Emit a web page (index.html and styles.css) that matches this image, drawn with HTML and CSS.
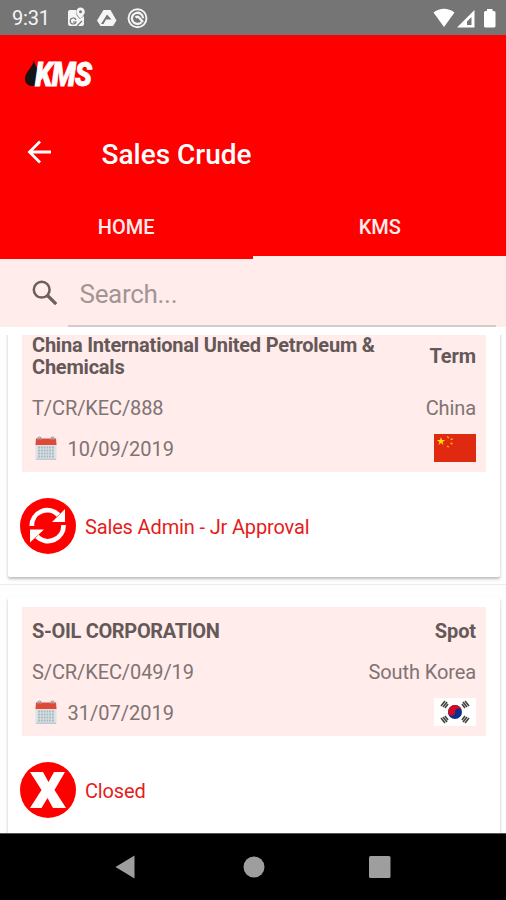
FILE: index.html
```html
<!DOCTYPE html>
<html lang="en">
<head>
<meta charset="utf-8">
<title>Sales Crude</title>
<link rel="stylesheet" href="styles.css">
</head>
<body>
<svg width="0" height="0" class="defs">
  <symbol id="calendar" viewBox="0 0 22 25">
    <path d="M.5 8h21v14.5q0 1.500-1.500 1.500H2Q.5 24 .5 22.500z" fill="#dce3e6"/>
    <path d="M1 22.500h20V24H1z" fill="#bccbd2"/>
    <path d="M1 2.500h20l.5 6.500H.5z" fill="#df4937"/>
    <path d="M3 11.500h16M3 14.500h16M3 17.500h16M3 20.500h16" stroke="#a9bac2" stroke-width="1.800" stroke-dasharray="2 .8"/>
    <path d="M3 4V2.500a1.500 1.500 0 0 1 3 0V4M16 4V2.500a1.500 1.500 0 0 1 3 0V4" fill="none" stroke="#929da4" stroke-width="1.200"/>
  </symbol>
</svg>
<div class="screen">
  <div class="statusbar">
    <span class="time">9:31</span>
    <svg class="left-icons" width="86" height="24" viewBox="64 5 86 24">
      <path fill="#f5f5f5" d="M69 9h7q-1 5 4 9l4-3v8q0 2-2 2H70q-2 0-2-2V11q0-2 2-2z"/>
      <path d="M76 19a3 3 0 1 0 0 2h-3M77 25l5-5" fill="none" stroke="#777" stroke-width="1.200"/>
      <path fill="#f5f5f5" d="M80.500 6.500a4.300 4.300 0 0 1 4.300 4.300c0 3-4.300 7-4.300 7s-4.300-4-4.300-7a4.300 4.300 0 0 1 4.300-4.300z"/>
      <circle cx="80.500" cy="10.800" r="1.500" fill="#777"/>
      <path fill="#f5f5f5" d="M103.500 9h7l6 10.500-3.500 5.500h-12.500L97 19.500zM107 13.500L101 23h2.500l2.500-4.500h5.500z" fill-rule="evenodd"/>
      <circle cx="137.500" cy="17.300" r="9" fill="none" stroke="#f5f5f5" stroke-width="1.900"/>
      <path d="M141.500 21.300a5.600 5.600 0 1 1 1.600-4M134.500 22a5.600 5.600 0 0 0 4 .8" fill="none" stroke="#f5f5f5" stroke-width="2.300"/>
      <path d="M135.500 16.500q2-1.500 3.500 0l4 4.500" fill="none" stroke="#f5f5f5" stroke-width="2.400"/>
    </svg>
    <svg class="right-icons" width="66" height="24" viewBox="432 5 66 24">
      <path fill="#fff" d="M433.500 11.500q10.500-7.500 21 0L444 26z"/>
      <path fill="#fff" fill-rule="evenodd" d="M474.500 9v17.500H457zM471.500 16v8h-4.500v-3.500z"/>
      <path fill="#fff" d="M487 8h5.500v2h1.500q1.500 0 1.500 1.500v13.500q0 1.500-1.500 1.500h-8.500q-1.500 0-1.500-1.500V11.500q0-1.500 1.500-1.500H487z"/>
    </svg>
  </div>
  <header class="header">
    <div class="brand">
      <svg width="13" height="27" viewBox="0 0 13 27"><path fill="#171313" d="M9 0C8 7 0 12 0 19c0 4 3 7 7 7h3l3-17q-3-3-4-9z"/></svg>
      <span class="brand-name">KMS</span>
    </div>
    <div class="titlebar">
      <svg width="25" height="24" viewBox="0 0 25 24"><path d="M13 1.500L2.500 12 13 22.500M2.500 12H24" fill="none" stroke="#fff" stroke-width="2.800"/></svg>
      <h1 class="title">Sales Crude</h1>
    </div>
    <nav class="tabs">
      <div class="tab"><span>HOME</span></div>
      <div class="tab active"><span>KMS</span></div>
    </nav>
  </header>
  <div class="search">
    <svg width="26" height="26" viewBox="0 0 26 26"><circle cx="9.700" cy="9.700" r="7.900" fill="none" stroke="#6b5f5f" stroke-width="2.500"/><path d="M15.500 15.500l8.700 8.700" stroke="#6b5f5f" stroke-width="3.200"/></svg>
    <div class="field">Search...</div>
  </div>
  <main class="list">
    <article class="card first">
      <section class="panel">
        <div class="row head"><span class="china-name">China International United Petroleum &amp;<br>Chemicals</span><span class="kind">Term</span></div>
        <div class="row line"><span>T/CR/KEC/888</span><span>China</span></div>
        <div class="row line">
          <span class="date"><svg width="22" height="25"><use href="#calendar"/></svg>10/09/2019</span>
          <svg class="flag" width="42" height="28" viewBox="0 0 42 28">
            <path fill="#df2910" d="M0 0h42v28H0z"/>
            <path fill="#ffdb00" d="M7 3l1 3h3.200l-2.600 1.900 1 3.100L7 9.100 4.400 11l1-3.100L2.800 6H6z"/>
            <path d="M13 2.500l2 1.500M16.500 5.500l2.200-.5M16.500 9l2 1M13 12l1.800 1.200" stroke="#f4ad08" stroke-width="1.500"/>
          </svg>
        </div>
      </section>
      <div class="status">
        <svg width="56" height="56" viewBox="0 0 56 56">
          <circle cx="28" cy="28" r="28" fill="#f00"/>
          <path d="M11.800 28A15.500 15.500 0 0 1 38.500 17M43.500 27A15.500 15.500 0 0 1 17 38.500" fill="none" stroke="#fff" stroke-width="4.800"/>
          <path d="M45 11V24H32zM10 44.500V31.500H24z" fill="#fff"/>
        </svg>
        <span>Sales Admin - Jr Approval</span>
      </div>
    </article>
    <div class="divider"></div>
    <article class="card">
      <section class="panel">
        <div class="row head"><span class="oil-name">S-OIL CORPORATION</span><span class="kind">Spot</span></div>
        <div class="row line"><span>S/CR/KEC/049/19</span><span>South Korea</span></div>
        <div class="row line">
          <span class="date"><svg width="22" height="25"><use href="#calendar"/></svg>31/07/2019</span>
          <svg class="flag" width="42" height="28" viewBox="0 0 42 28">
            <path fill="#fff" d="M0 0h42v28H0z"/>
            <circle cx="21" cy="14" r="7" fill="#08318f"/>
            <path fill="#d50b24" d="M14 14a7 7 0 0 1 14 0a3.500 3.500 0 0 0-7 0a3.500 3.500 0 0 1-7 0z"/>
            <g stroke="#444" stroke-width="1.600">
              <path d="M7 8l4-5M9 9l4-5M11 10l3-4M28 22l3-4M29 24l4-5M31 25l4-5M31 3l4 5M29 4l4 5M28 6l3 4M11 18l3 4M9 19l4 5M7 20l4 5"/>
            </g>
          </svg>
        </div>
      </section>
      <div class="status">
        <svg width="56" height="56" viewBox="0 0 56 56">
          <circle cx="28" cy="28" r="28" fill="#f00"/>
          <path d="M10 10h13l5.500 10L34 10h11L34.500 28 46 46H33l-5.500-10-6 10H10l11.500-18z" fill="#fff"/>
        </svg>
        <span>Closed</span>
      </div>
    </article>
  </main>
  <footer class="navbar">
    <svg width="20" height="24" viewBox="0 0 20 24"><path d="M19.500.5v23L.5 12z" fill="#9e9e9e"/></svg>
    <svg class="home" width="22" height="22" viewBox="0 0 22 22"><circle cx="11" cy="11" r="10.500" fill="#9e9e9e"/></svg>
    <svg width="22" height="22" viewBox="0 0 22 22"><rect width="21.500" height="22" rx="1.500" fill="#9e9e9e"/></svg>
  </footer>
</div>
</body>
</html>
```

FILE: styles.css
```css
* { box-sizing: border-box; }
body { margin: 0; font-family: Roboto, "Liberation Sans", sans-serif; }
svg { display: block; flex: none; }
.defs { height: 0; }
.screen { width: 506px; height: 900px; display: flex; flex-direction: column; overflow: hidden; background: #fff; }
.statusbar { height: 35px; flex: none; background: #757575; display: flex; align-items: center; padding: 0 8px 0 12px; }
.time { width: 52px; color: #f5f5f5; font-size: 20px; line-height: 36px; letter-spacing: -.2px; }
.right-icons { margin-left: auto; }
.header { height: 224px; flex: none; background: #f00; color: #fff; display: flex; flex-direction: column; }
.brand { display: flex; height: 79px; padding: 25px 0 0 25px; }
.brand-name { margin-left: -3px; font: italic 900 34px/29px Roboto, sans-serif; letter-spacing: -1px; transform: scaleX(.83); transform-origin: left; -webkit-text-stroke: .8px #fff; }
.titlebar { height: 80px; display: flex; align-items: center; padding: 0 0 4px 27px; }
.title { margin: 5px 0 0 49.5px; font-size: 28px; font-weight: 500; line-height: 34px; white-space: nowrap; }
.tabs { display: flex; flex: 1; }
.tab { flex: 1; text-align: center; padding-top: 21px; font-size: 20px; line-height: 25px; font-weight: 500; color: #ffeceb; border-bottom: 3px solid #f00; }
.tab.active { border-bottom-color: #ffeceb; padding-left: 1px; }
.search { height: 68px; flex: none; background: #ffeceb; display: flex; align-items: center; padding: 0 10px 0 32px; }
.field { flex: 1; height: 68px; margin-left: 10px; padding-left: 11.5px; color: #a29595; font-size: 26px; line-height: 71px; letter-spacing: -.3px; border-bottom: 2px solid #d6cbc8; }
.list { height: 498px; margin-top: 8px; overflow: hidden; flex: none; background: #fefefe; }
.card { margin: 12px 6px 0 8px; padding: 10px 14px 23px; background: #fff; border-radius: 2px; box-shadow: 0 2px 3px rgba(0,0,0,.26); }
.card.first { margin-top: -24.5px; }
.divider { height: 1px; margin-top: 7px; background: #ececec; }
.panel { padding: 13px 10px 2.500px; background: #ffeceb; color: #807373; font-size: 20px; letter-spacing: -.1px; }
.row { display: flex; align-items: center; justify-content: space-between; white-space: nowrap; }
.head { font-weight: 700; line-height: 22.500px; margin-bottom: 9px; color: #655858; }
.china-name { letter-spacing: -.21px; }
.oil-name { letter-spacing: -.33px; }
.line { height: 41px; }
.date { display: flex; align-items: center; gap: 11px; padding-left: 2.5px; letter-spacing: 0; }
.date svg { margin-top: -2px; }
.flag { margin-top: -2px; }
.status { display: flex; align-items: center; gap: 9px; margin: 26px 0 0 -2px; color: #e51c1c; font-size: 20px; letter-spacing: -.15px; }
.status span { padding-top: 2px; }
.navbar { height: 67px; flex: none; background: #000; display: flex; align-items: center; justify-content: space-between; padding: 0 115px; border-top: 1px solid #555; }
.home { margin-left: 3px; }
```
